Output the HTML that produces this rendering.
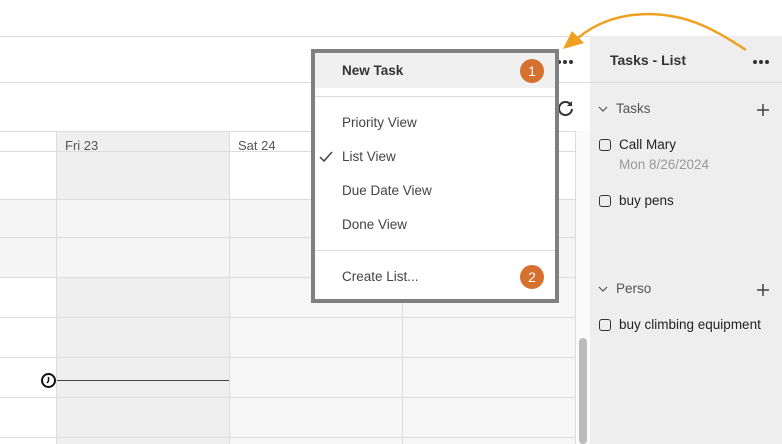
<!DOCTYPE html><html><head><style>
*{margin:0;padding:0;box-sizing:border-box}
body{width:782px;height:444px;overflow:hidden;background:#fff;font-family:"Liberation Sans",sans-serif;position:relative;color:#333}
.a{position:absolute}
.hl{position:absolute;height:1px;background:#dcdcdc}
.vl{position:absolute;width:1px;background:#dcdcdc}
.mi{position:absolute;left:342px;font-size:13.5px;color:#444}
.badge{position:absolute;width:24px;height:24px;border-radius:12px;background:#d5702f;color:#fff;font-size:14px;text-align:center;line-height:24px}
.cb{position:absolute;width:12px;height:12px;border:1.5px solid #333;border-radius:3px}
.t{position:absolute;font-size:13.5px;color:#222}
</style></head><body>
<div class="hl" style="left:0;top:36px;width:590px"></div>
<div class="hl" style="left:0;top:82px;width:782px"></div>
<div class="a" style="left:0;top:199px;width:575px;height:78px;background:#f5f5f5"></div>
<div class="a" style="left:57px;top:131px;width:172px;height:68px;background:#efefef"></div>
<div class="a" style="left:57px;top:277px;width:172px;height:167px;background:#efefef"></div>
<div class="a" style="left:229px;top:277px;width:346px;height:167px;background:#f6f6f6"></div>
<div class="hl" style="left:0;top:131px;width:575px"></div>
<div class="hl" style="left:0;top:151px;width:575px"></div>
<div class="hl" style="left:0;top:199px;width:575px"></div>
<div class="hl" style="left:0;top:237px;width:575px"></div>
<div class="hl" style="left:0;top:277px;width:575px"></div>
<div class="hl" style="left:0;top:317px;width:575px"></div>
<div class="hl" style="left:0;top:357px;width:575px"></div>
<div class="hl" style="left:0;top:397px;width:575px"></div>
<div class="hl" style="left:0;top:437px;width:575px"></div>
<div class="vl" style="left:56px;top:131px;height:313px"></div>
<div class="vl" style="left:229px;top:131px;height:313px"></div>
<div class="vl" style="left:402px;top:151px;height:293px"></div>
<div class="vl" style="left:575px;top:131px;height:313px"></div>
<div class="t" style="left:65px;top:138px;font-size:13px;color:#555">Fri 23</div>
<div class="t" style="left:238px;top:138px;font-size:13px;color:#555">Sat 24</div>
<div class="a" style="left:57px;top:380px;width:172px;height:1px;background:#444"></div>
<svg class="a" style="left:40px;top:372px" width="17" height="17"><circle cx="8.5" cy="8.5" r="6.5" fill="#fff" stroke="#111" stroke-width="2"/><path d="M8.5 5v4l-1.5 2" stroke="#111" stroke-width="1.5" fill="none"/></svg>
<div class="a" style="left:576px;top:131px;width:14px;height:313px;background:#fafafa"></div>
<div class="a" style="left:579px;top:338px;width:8px;height:106px;background:#bbb;border-radius:4px"></div>
<svg class="a" style="left:557px;top:99px" width="18" height="18"><path d="M14 6A6.5 6.5 0 1 0 15 10" stroke="#333" stroke-width="2" fill="none"/><path d="M15 2v5h-5z" fill="#333"/></svg>
<svg class="a" style="left:556px;top:58px" width="20" height="8"><circle cx="3" cy="4" r="2" fill="#333"/><circle cx="9" cy="4" r="2" fill="#333"/><circle cx="15" cy="4" r="2" fill="#333"/></svg>
<div class="a" style="left:590px;top:36px;width:192px;height:408px;background:#eeeeee"></div>
<div class="hl" style="left:590px;top:82px;width:192px"></div>
<div class="t" style="left:610px;top:52px;font-weight:bold;font-size:14px;color:#333">Tasks - List</div>
<svg class="a" style="left:752px;top:58px" width="20" height="8"><circle cx="3" cy="4" r="2" fill="#333"/><circle cx="9" cy="4" r="2" fill="#333"/><circle cx="15" cy="4" r="2" fill="#333"/></svg>
<svg class="a" style="left:597px;top:104px" width="12" height="12"><path d="M2 3l4 4 4-4" stroke="#555" stroke-width="1.2" fill="none"/></svg>
<div class="t" style="left:616px;top:101px;color:#555">Tasks</div>
<svg class="a" style="left:757px;top:104px" width="12" height="12"><path d="M6 0v12M0 6h12" stroke="#444" stroke-width="1.5"/></svg>
<div class="cb" style="left:599px;top:139px"></div>
<div class="t" style="left:619px;top:137px">Call Mary</div>
<div class="t" style="left:619px;top:157px;color:#999">Mon 8/26/2024</div>
<div class="cb" style="left:599px;top:195px"></div>
<div class="t" style="left:619px;top:193px">buy pens</div>
<svg class="a" style="left:597px;top:284px" width="12" height="12"><path d="M2 3l4 4 4-4" stroke="#555" stroke-width="1.2" fill="none"/></svg>
<div class="t" style="left:616px;top:281px;color:#555">Perso</div>
<svg class="a" style="left:757px;top:284px" width="12" height="12"><path d="M6 0v12M0 6h12" stroke="#444" stroke-width="1.5"/></svg>
<div class="cb" style="left:599px;top:319px"></div>
<div class="t" style="left:619px;top:317px">buy climbing equipment</div>
<div class="a" style="left:311px;top:49px;width:248px;height:254px;background:#fff;border:4px solid #808080"></div>
<div class="a" style="left:315px;top:53px;width:240px;height:35px;background:#f0f0f0"></div>
<div class="hl" style="left:315px;top:96px;width:240px"></div>
<div class="hl" style="left:315px;top:250px;width:240px"></div>
<div class="mi" style="top:63px;font-weight:bold;color:#333">New Task</div>
<div class="mi" style="top:115px">Priority View</div>
<div class="mi" style="top:149px">List View</div>
<div class="mi" style="top:183px">Due Date View</div>
<div class="mi" style="top:217px">Done View</div>
<div class="mi" style="top:269px">Create List...</div>
<svg class="a" style="left:318px;top:150px" width="16" height="14"><path d="M2 7l4 4 8-9" stroke="#444" stroke-width="1.5" fill="none"/></svg>
<div class="badge" style="left:520px;top:59px">1</div>
<div class="badge" style="left:520px;top:265px">2</div>
<svg class="a" style="left:0;top:0" width="782" height="60"><path d="M746 50C715 30 690 15 650 14C615 14 592 26 578 38" stroke="#f0a020" stroke-width="2.5" fill="none"/><path d="M563 49L572 31L584 43z" fill="#f0a020"/></svg>
</body></html>
